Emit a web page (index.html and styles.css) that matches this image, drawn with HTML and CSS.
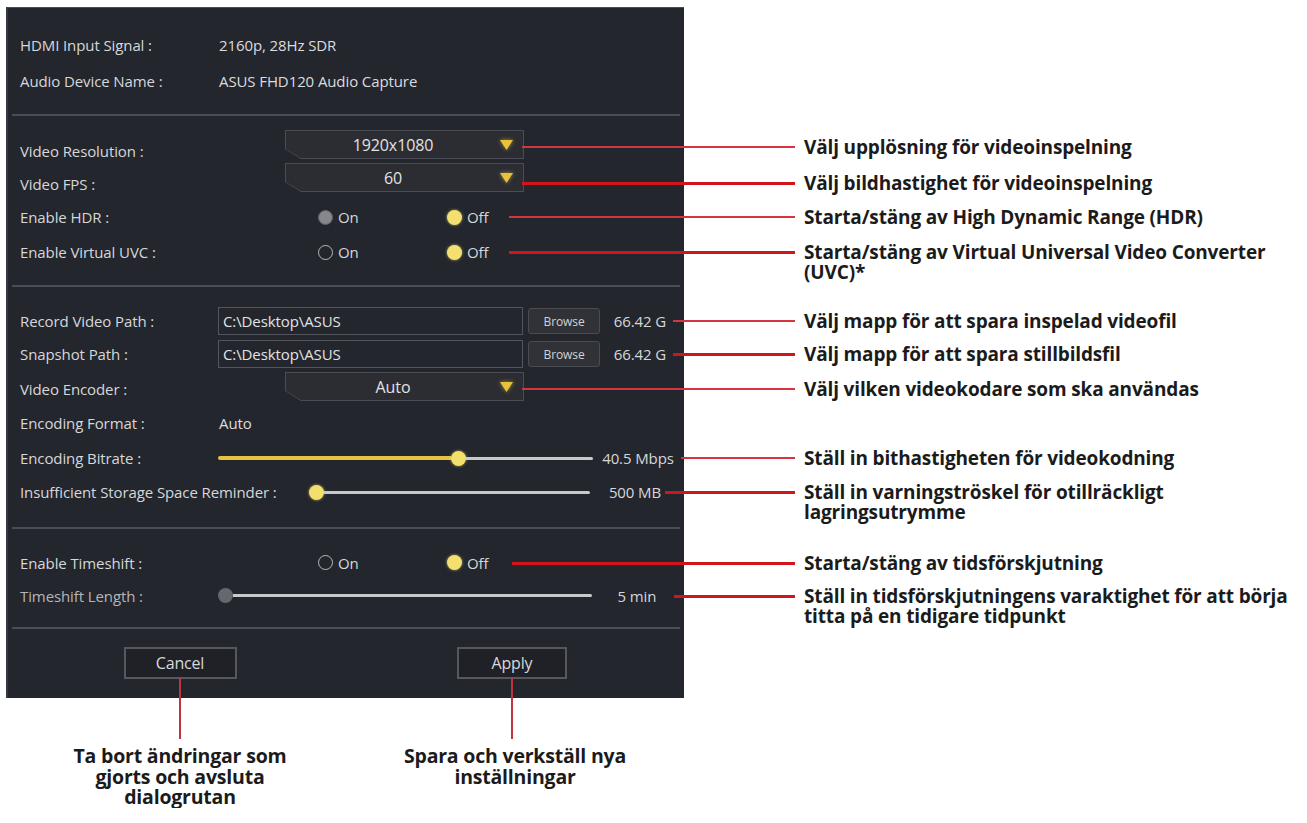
FILE: index.html
```html
<!DOCTYPE html>
<html lang="sv">
<head>
<meta charset="utf-8">
<title>Inställningar – ASUS FHD120</title>
<link rel="stylesheet" href="styles.css">
</head>
<body>
<main class="sheet">
  <div class="cell pad-top"></div>

  <div class="cell row r36"><span class="lbl">HDMI Input Signal :</span><span class="val">2160p, 28Hz SDR</span></div>
  <div class="cell row r36"><span class="lbl">Audio Device Name :</span><span class="val">ASUS FHD120 Audio Capture</span></div>
  <div class="cell sep r31"><hr></div>

  <div class="cell row r33"><span class="lbl low">Video Resolution :</span>
    <div class="drop"><div class="drop-in"><span class="drop-txt">1920x1080</span><svg class="arrow" width="13" height="10" viewBox="0 0 13 10"><path d="M0 0H13L6.5 10Z"/></svg></div></div>
  </div>
  <p class="note thin lead-drop">Välj upplösning för videoinspelning</p>

  <div class="cell row r33"><span class="lbl low">Video FPS :</span>
    <div class="drop"><div class="drop-in"><span class="drop-txt">60</span><svg class="arrow" width="13" height="10" viewBox="0 0 13 10"><path d="M0 0H13L6.5 10Z"/></svg></div></div>
  </div>
  <p class="note lead-drop nudge">Välj bildhastighet för videoinspelning</p>

  <div class="cell row r42"><span class="lbl">Enable HDR :</span>
    <div class="radios"><span class="opt"><i class="dot dis"></i>On</span><span class="opt"><i class="dot on"></i>Off</span></div>
  </div>
  <p class="note thin lead-radio">Starta/stäng av High Dynamic Range (HDR)</p>

  <div class="cell row r28"><span class="lbl">Enable Virtual UVC :</span>
    <div class="radios"><span class="opt"><i class="dot ring"></i>On</span><span class="opt"><i class="dot on"></i>Off</span></div>
  </div>
  <p class="note lead-radio">Starta/stäng av Virtual Universal Video Converter<br>(UVC)*</p>

  <div class="cell sep r40"><hr></div>

  <div class="cell row r30"><span class="lbl">Record Video Path :</span>
    <span class="path">C:\Desktop\ASUS</span><span class="browse">Browse</span><span class="size">66.42 G</span>
  </div>
  <p class="note thin lead-size">Välj mapp för att spara inspelad videofil</p>

  <div class="cell row r36"><span class="lbl">Snapshot Path :</span>
    <span class="path">C:\Desktop\ASUS</span><span class="browse">Browse</span><span class="size">66.42 G</span>
  </div>
  <p class="note lead-size">Välj mapp för att spara stillbildsfil</p>

  <div class="cell row r33"><span class="lbl">Video Encoder :</span>
    <div class="drop"><div class="drop-in"><span class="drop-txt">Auto</span><svg class="arrow" width="13" height="10" viewBox="0 0 13 10"><path d="M0 0H13L6.5 10Z"/></svg></div></div>
  </div>
  <p class="note thin lead-drop">Välj vilken videokodare som ska användas</p>

  <div class="cell row r36"><span class="lbl">Encoding Format :</span><span class="val">Auto</span></div>

  <div class="cell row r34"><span class="lbl">Encoding Bitrate :</span>
    <div class="slider s-rate"><span class="fill" style="width:233px"></span><span class="thumb"></span><span class="rest"></span></div><span class="slider-val">40.5 Mbps</span>
  </div>
  <p class="note thin lead-rate">Ställ in bithastigheten för videokodning</p>

  <div class="cell row r34"><span class="lbl auto">Insufficient Storage Space Reminder :</span>
    <div class="slider s-rem"><span class="thumb"></span><span class="rest"></span></div><span class="slider-val">500 MB</span>
  </div>
  <p class="note lead-rem">Ställ in varningströskel för otillräckligt<br>lagringsutrymme</p>

  <div class="cell sep r37"><hr></div>

  <div class="cell row r33"><span class="lbl">Enable Timeshift :</span>
    <div class="radios"><span class="opt"><i class="dot ring"></i>On</span><span class="opt"><i class="dot on"></i>Off</span></div>
  </div>
  <p class="note lead-ts">Starta/stäng av tidsförskjutning</p>

  <div class="cell row r33"><span class="lbl dim">Timeshift Length :</span>
    <div class="slider s-len"><span class="thumb off"></span><span class="rest"></span></div><span class="slider-val">5 min</span>
  </div>
  <p class="note lead-len">Ställ in tidsförskjutningens varaktighet för att börja<br>titta på en tidigare tidpunkt</p>

  <div class="cell sep r32"><hr></div>

  <div class="cell actions r38">
    <button class="btn cancel" type="button">Cancel</button>
    <button class="btn apply" type="button">Apply</button>
  </div>
  <div class="cell pad-bottom"></div>

  <div class="captions">
    <p>Ta bort ändringar som<br>gjorts och avsluta<br>dialogrutan</p>
    <p>Spara och verkställ nya<br>inställningar</p>
  </div>
</main>
</body>
</html>
```

FILE: styles.css
```css
html, body {
  margin: 0;
  background: #ffffff;
}

body {
  font-family: "Open Sans", "Noto Sans", sans-serif;
}

.sheet {
  display: grid;
  grid-template-columns: 678px 623px;
  margin: 7px 0 0 6px;
}

/* ---------- dialog cells ---------- */
.cell {
  grid-column: 1;
  background: #24262e;
  border-left: 2px solid #353842;
  box-sizing: border-box;
  padding: 0 4px 0 12px;
}

.pad-top {
  height: 20px;
  border-top: 1px solid #4a4c54;
}
.pad-bottom { height: 16px; }

.r28 { height: 28px; }
.r30 { height: 30px; }
.r31 { height: 31px; }
.r32 { height: 32px; }
.r33 { height: 33px; }
.r34 { height: 34px; }
.r36 { height: 36px; }
.r37 { height: 37px; }
.r38 { height: 38px; }
.r40 { height: 40px; }
.r42 { height: 42px; }

.row {
  display: flex;
  align-items: center;
  font-size: 15px;
  letter-spacing: -0.1px;
  color: #d6d7d9;
  white-space: nowrap;
}

.lbl {
  flex: none;
  width: 198px;
  line-height: 20px;
}
.lbl.auto { width: auto; }
.lbl.low { padding-top: 8px; }
.lbl.dim { color: #b4b5b8; }

.val {
  padding-left: 1px;
  color: #dcdcde;
}

.sep {
  display: flex;
  align-items: center;
  padding: 0 4px;
}
.sep hr {
  flex: 1;
  margin: 0;
  border: 0;
  height: 2px;
  background: #4a4d57;
}

/* dropdown */
.drop {
  align-self: flex-start;
  flex: none;
  margin-left: 67px;
  width: 239px;
  height: 29px;
  box-sizing: border-box;
  padding: 1px;
  background: #4a4d55;
  clip-path: polygon(0 0, 100% 0, 100% 100%, 16px 100%, 0 calc(100% - 10px));
}
.drop-in {
  height: 100%;
  display: flex;
  align-items: center;
  background: #2b2d33;
  clip-path: polygon(0 0, 100% 0, 100% 100%, 15px 100%, 0 calc(100% - 9px));
}
.drop-txt {
  flex: 1;
  text-align: center;
  font-size: 16px;
  color: #e2e2e4;
}
.arrow {
  flex: none;
  margin-right: 10px;
  fill: #e9c23c;
  filter: drop-shadow(0 0 2px rgba(240, 205, 70, 0.6));
}

/* radios */
.radios {
  display: flex;
  margin-left: 100px;
}
.opt {
  width: 129px;
  display: flex;
  align-items: center;
  gap: 5px;
  color: #d6d7d9;
}
.dot {
  flex: none;
  width: 15px;
  height: 15px;
  border-radius: 50%;
  box-sizing: border-box;
}
.dot.on {
  background: #f3e070;
  box-shadow: 0 0 3px rgba(246, 226, 110, 0.7);
}
.dot.dis {
  background: #85878c;
  border: 1px solid #5f6166;
}
.dot.ring {
  border: 1.5px solid #b7b8ba;
}

/* paths */
.path {
  flex: none;
  width: 305px;
  height: 28px;
  box-sizing: border-box;
  border: 1px solid #52555c;
  display: flex;
  align-items: center;
  padding-left: 4px;
  color: #e2e2e4;
}
.browse {
  flex: none;
  margin-left: 5px;
  width: 72px;
  height: 26px;
  box-sizing: border-box;
  border: 1px solid #4a4c53;
  border-radius: 3px;
  background: #303238;
  display: flex;
  align-items: center;
  justify-content: center;
  font-size: 12px;
  color: #d2d2d4;
}
.size {
  margin-left: auto;
  width: 80px;
  text-align: center;
}

/* sliders */
.slider {
  margin-left: auto;
  flex: none;
  display: flex;
  align-items: center;
  height: 16px;
}
.s-rate { width: 375px; }
.s-rem { width: 281px; }
.s-len { width: 374px; }

.fill {
  height: 4px;
  background: #e6c244;
  border-radius: 2px 0 0 2px;
}
.thumb {
  flex: none;
  width: 15px;
  height: 15px;
  border-radius: 50%;
  background: #f3df6c;
  box-shadow: 0 0 3px rgba(245, 222, 100, 0.7);
}
.thumb.off {
  background: #66686f;
  box-shadow: none;
}
.rest {
  flex: 1;
  height: 3px;
  background: #c8c9cb;
  border-radius: 0 2px 2px 0;
}
.slider-val {
  flex: none;
  width: 90px;
  text-align: center;
}

/* buttons */
.actions {
  display: grid;
  grid-template-columns: 344px 320px;
  justify-items: center;
  align-items: center;
  padding: 0;
}
.btn {
  position: relative;
  height: 32px;
  box-sizing: border-box;
  border: 2px solid #55585f;
  background: #1f2127;
  color: #d8d9db;
  font: 16px "Open Sans", "Noto Sans", sans-serif;
  letter-spacing: -0.2px;
  padding: 0;
}
.cancel { width: 113px; }
.apply { width: 110px; }
.btn::after {
  content: "";
  position: absolute;
  left: 50%;
  top: 100%;
  margin-left: -1px;
  width: 2px;
  height: 62px;
  background: #c0343b;
}

/* ---------- annotations ---------- */
.note {
  grid-column: 2;
  align-self: center;
  position: relative;
  margin: 0;
  height: 20px;
  padding-left: 120px;
  white-space: nowrap;
  font: 700 19px/20px "Open Sans", "Noto Sans", sans-serif;
  letter-spacing: -0.15px;
  color: #1b1b1b;
}
.note::before {
  content: "";
  position: absolute;
  top: 9px;
  height: 3px;
  left: calc(111px - var(--lead));
  width: var(--lead);
  background: #d2141d;
}
.note.thin::before {
  height: 2px;
  background: #d3363e;
}
.note.nudge { margin-top: 6px; }

.lead-drop { --lead: 273px; }
.lead-radio { --lead: 286px; }
.lead-size { --lead: 122px; }
.lead-rate { --lead: 114px; }
.lead-rem { --lead: 130px; }
.lead-ts { --lead: 283px; }
.lead-len { --lead: 121px; }

.captions {
  grid-column: 1;
  display: grid;
  grid-template-columns: 348px 322px;
  padding-top: 48px;
}
.captions p {
  margin: 0;
  text-align: center;
  font: 700 19.5px/20.5px "Open Sans", "Noto Sans", sans-serif;
  letter-spacing: -0.2px;
  color: #1b1b1b;
}
```
